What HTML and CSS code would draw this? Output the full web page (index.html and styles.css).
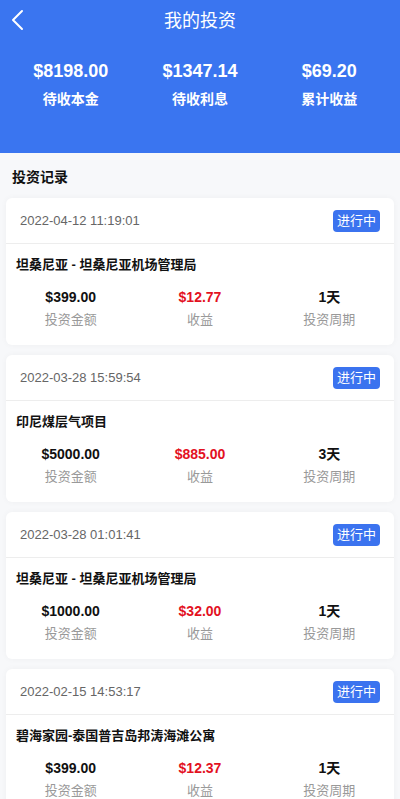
FILE: index.html
```html
<!DOCTYPE html>
<html lang="zh">
<head>
<meta charset="utf-8">
<title>我的投资</title>
<link rel="stylesheet" href="styles.css">
</head>
<body>
<div class="page">
  <header class="hero">
    <div class="topbar">
      <svg class="back" width="14" height="22" viewBox="0 0 14 22"><path d="M12 2 L3 11 L12 20" fill="none" stroke="#fff" stroke-width="2" stroke-linecap="round" stroke-linejoin="round"/></svg>
      <h1 class="title">我的投资</h1>
    </div>
    <div class="summary">
      <div class="sum-item"><div class="sum-val">$8198.00</div><div class="sum-label">待收本金</div></div>
      <div class="sum-item"><div class="sum-val">$1347.14</div><div class="sum-label">待收利息</div></div>
      <div class="sum-item"><div class="sum-val">$69.20</div><div class="sum-label">累计收益</div></div>
    </div>
  </header>
  <main class="content">
    <h2 class="section-title">投资记录</h2>
    <div class="card">
      <div class="card-head"><span class="date">2022-04-12 11:19:01</span><span class="badge">进行中</span></div>
      <div class="card-body">
        <div class="name">坦桑尼亚 - 坦桑尼亚机场管理局</div>
        <div class="stats">
          <div class="stat"><div class="val">$399.00</div><div class="lab">投资金额</div></div>
          <div class="stat"><div class="val red">$12.77</div><div class="lab">收益</div></div>
          <div class="stat"><div class="val">1天</div><div class="lab">投资周期</div></div>
        </div>
      </div>
    </div>
    <div class="card">
      <div class="card-head"><span class="date">2022-03-28 15:59:54</span><span class="badge">进行中</span></div>
      <div class="card-body">
        <div class="name">印尼煤层气项目</div>
        <div class="stats">
          <div class="stat"><div class="val">$5000.00</div><div class="lab">投资金额</div></div>
          <div class="stat"><div class="val red">$885.00</div><div class="lab">收益</div></div>
          <div class="stat"><div class="val">3天</div><div class="lab">投资周期</div></div>
        </div>
      </div>
    </div>
    <div class="card">
      <div class="card-head"><span class="date">2022-03-28 01:01:41</span><span class="badge">进行中</span></div>
      <div class="card-body">
        <div class="name">坦桑尼亚 - 坦桑尼亚机场管理局</div>
        <div class="stats">
          <div class="stat"><div class="val">$1000.00</div><div class="lab">投资金额</div></div>
          <div class="stat"><div class="val red">$32.00</div><div class="lab">收益</div></div>
          <div class="stat"><div class="val">1天</div><div class="lab">投资周期</div></div>
        </div>
      </div>
    </div>
    <div class="card">
      <div class="card-head"><span class="date">2022-02-15 14:53:17</span><span class="badge">进行中</span></div>
      <div class="card-body">
        <div class="name">碧海家园-泰国普吉岛邦涛海滩公寓</div>
        <div class="stats">
          <div class="stat"><div class="val">$399.00</div><div class="lab">投资金额</div></div>
          <div class="stat"><div class="val red">$12.37</div><div class="lab">收益</div></div>
          <div class="stat"><div class="val">1天</div><div class="lab">投资周期</div></div>
        </div>
      </div>
    </div>
  </main>
</div>
</body>
</html>
```

FILE: styles.css
```css
* { box-sizing: border-box; margin: 0; padding: 0; }
html, body { background: #f7f8fa; }
body {
  font-family: "Liberation Sans", Arial, "Noto Sans CJK SC", sans-serif;
  color: #111;
}
.page { width: 400px; min-height: 799px; overflow: hidden; }
.hero {
  background: #3a75f0;
  height: 153px;
  color: #fff;
}
.topbar {
  height: 42px;
  display: flex;
  align-items: center;
  justify-content: center;
  position: relative;
}
.back { position: absolute; left: 10px; top: 9px; }
.title { font-size: 18px; font-weight: normal; line-height: 42px; }
.summary {
  display: grid;
  grid-template-columns: repeat(3, 1fr);
  padding: 17px 6px 0;
  text-align: center;
}
.sum-val { font-size: 18px; font-weight: bold; line-height: 24px; }
.sum-label { font-size: 14px; font-weight: bold; line-height: 20px; margin-top: 6px; }
.content { padding: 14px 6px 20px; }
.section-title { font-size: 14px; font-weight: bold; line-height: 20px; padding-left: 6px; margin-bottom: 11px; }
.card {
  background: #fff;
  border-radius: 6px;
  margin-bottom: 10px;
  box-shadow: 0 0 6px rgba(0,0,0,0.04);
}
.card-head {
  height: 46px;
  display: flex;
  align-items: center;
  justify-content: space-between;
  padding: 0 14px;
  border-bottom: 1px solid #ededed;
}
.date { font-size: 13px; color: #666; }
.badge {
  background: #3b73ef;
  color: #fff;
  font-size: 13px;
  line-height: 22px;
  height: 22px;
  padding: 0 4px;
  border-radius: 4px;
}
.card-body { padding: 11px 0 15px; }
.name { font-size: 13px; font-weight: bold; line-height: 20px; padding-left: 10px; }
.stats {
  display: grid;
  grid-template-columns: repeat(3, 1fr);
  text-align: center;
  margin-top: 12px;
}
.val { font-size: 14px; font-weight: bold; line-height: 20px; color: #111; }
.val.red { color: #e3111f; }
.lab { font-size: 13px; color: #999; line-height: 20px; margin-top: 3px; }
```
